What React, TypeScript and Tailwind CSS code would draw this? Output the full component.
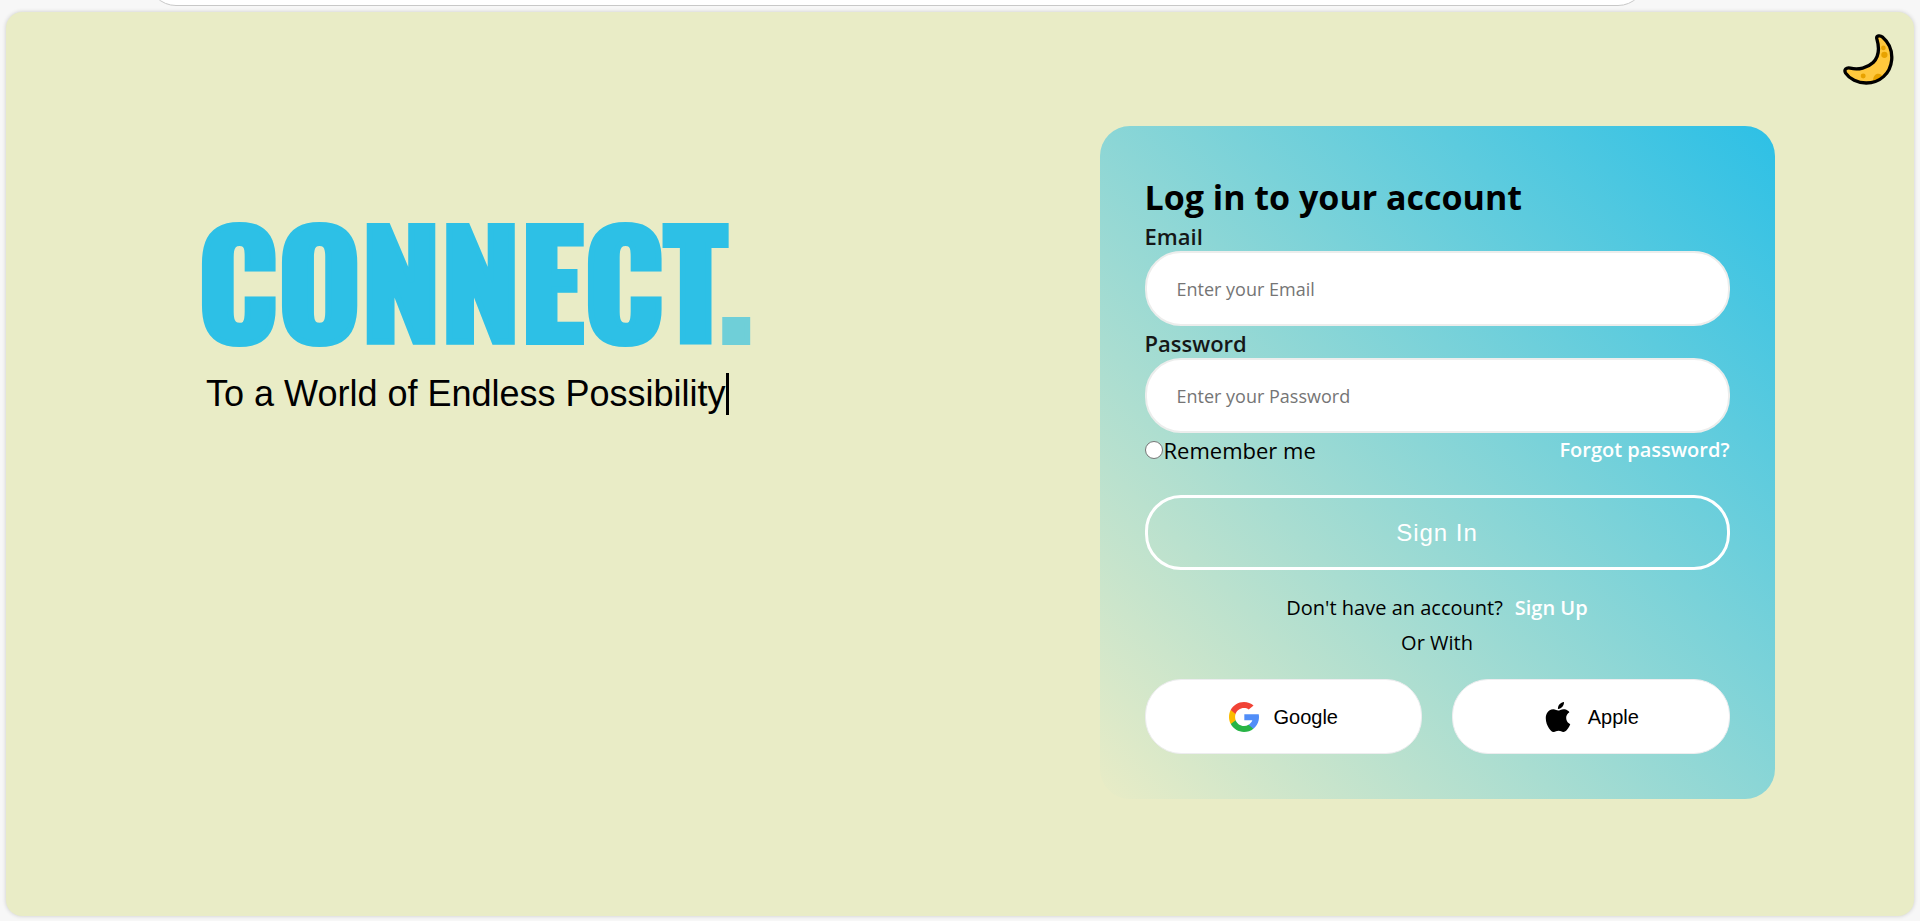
import React from "react";
import { SiApple } from "react-icons/si";

function MoonIcon() {
  return (
    <svg viewBox="-2 -2 154 154" className="size-[51px]" aria-hidden="true">
      <path
        d="M100 12C98 3 110 1 117 7C138 25 147 52 145 76C141 118 109 146 68 146C42 146 18 134 6 116C0 106 8 98 20 101C45 107 72 100 89 84C107 66 109 42 100 12Z"
        fill="#ffc83d"
      />
      <g fill="#e8a200">
        <circle cx="120" cy="40" r="7" />
        <circle cx="123" cy="61" r="9.5" />
        <circle cx="59" cy="125" r="7.5" />
        <path d="M89 142C88 124 97 117 106 118C111 119 114 121 116 123C109 131 100 139 89 142Z" />
      </g>
      <path
        d="M100 12C98 3 110 1 117 7C138 25 147 52 145 76C141 118 109 146 68 146C42 146 18 134 6 116C0 106 8 98 20 101C45 107 72 100 89 84C107 66 109 42 100 12Z"
        fill="none"
        stroke="#000"
        strokeWidth="10"
        strokeLinejoin="round"
      />
    </svg>
  );
}

function GoogleIcon() {
  return (
    <svg viewBox="0 0 512 512" className="size-[30px]" aria-hidden="true">
      <path fill="#FBBB00" d="M113.47,309.408L95.648,375.94l-65.139,1.378C11.042,341.211,0,299.9,0,256c0-42.451,10.324-82.483,28.624-117.732h0.014l57.992,10.632l25.404,57.644c-5.317,15.501-8.215,32.141-8.215,49.456C103.821,274.792,107.225,292.797,113.47,309.408z" />
      <path fill="#518EF8" d="M507.527,208.176C510.467,223.662,512,239.655,512,256c0,18.328-1.927,36.206-5.598,53.451c-12.462,58.683-45.025,109.925-90.134,146.187l-0.014-0.014l-73.044-3.727l-10.338-64.535c29.932-17.554,53.324-45.025,65.646-77.911h-136.89V208.176h138.887L507.527,208.176L507.527,208.176z" />
      <path fill="#28B446" d="M416.253,455.624l0.014,0.014C372.396,490.901,316.666,512,256,512c-97.491,0-182.252-54.491-225.491-134.681l82.961-67.91c21.619,57.698,77.278,98.771,142.53,98.771c28.047,0,54.323-7.582,76.87-20.818L416.253,455.624z" />
      <path fill="#F14336" d="M419.404,58.936l-82.933,67.896c-23.335-14.586-50.919-23.012-80.471-23.012c-66.729,0-123.429,42.957-143.965,102.724l-83.397-68.276h-0.014C71.23,56.123,157.06,0,256,0C318.115,0,375.068,22.126,419.404,58.936z" />
    </svg>
  );
}

function Field({ id, label, type }: { id: string; label: string; type: string }) {
  return (
    <div>
      <label htmlFor={id} className="block pt-0.5 text-[22px] leading-[30px] font-semibold text-[#151717]">
        {label}
      </label>
      <input
        id={id}
        type={type}
        placeholder={`Enter your ${label}`}
        className="block h-[75px] w-full rounded-[36px] border-2 border-[#ecedec] bg-white px-[30px] text-lg text-black outline-none placeholder:text-[#757575]"
      />
    </div>
  );
}

function SocialButton({ icon, name }: { icon: React.ReactNode; name: string }) {
  return (
    <button
      type="button"
      className="flex h-[75px] flex-1 items-center justify-center gap-[15px] rounded-[36px] border border-[#ededef] bg-white font-['Liberation_Sans',Arial,sans-serif] text-xl text-black"
    >
      {icon}
      {name}
    </button>
  );
}

export default function App() {
  return (
    <div className="flex min-h-screen flex-col bg-[#f7f7f7] px-1.5 pb-[5px] font-['Open_Sans','Noto_Sans',sans-serif] text-black">
      <div className="flex h-1.5 items-end overflow-hidden pr-[268px] pl-[142px]">
        <div className="h-14 flex-1 rounded-full border border-[#c8c8c8] bg-white" />
      </div>

      <main className="relative mt-1.5 grid flex-1 grid-cols-1 rounded-2xl bg-[#e9ecc6] shadow-[0_0_4px_rgba(0,0,0,0.18)] lg:grid-cols-2">
        <button type="button" aria-label="Toggle theme" className="absolute top-[22px] right-5">
          <MoonIcon />
        </button>

        <section className="px-6 pt-[171px] lg:pr-0 lg:pl-48">
          <h1 className="font-['Oswald','Roboto_Condensed',sans-serif] text-[142px] leading-[190px] font-bold text-[#2dc0e6] [-webkit-text-stroke:6px_#2dc0e6]">
            CONNECT
            <span className="text-[#6fcfd8] [-webkit-text-stroke:6px_#6fcfd8]">.</span>
          </h1>
          <p className="ml-2 w-fit border-r-[3px] border-black font-['Liberation_Sans',Arial,sans-serif] text-4xl leading-[42px]">
            To a World of Endless Possibility
          </p>
        </section>

        <section className="flex items-center justify-center pb-[3px]">
          <form className="w-full max-w-[675px] rounded-[30px] bg-[linear-gradient(45deg,#e9ecc6,#2dc0e6)] px-[45px] pt-[50px] pb-[45px]">
            <h2 className="text-[34px] leading-[43px] font-bold">Log in to your account</h2>
            <Field id="email" label="Email" type="email" />
            <Field id="password" label="Password" type="password" />

            <div className="flex items-center justify-between pt-0.5 leading-[30px]">
              <div className="flex items-center">
                <input
                  id="remember"
                  type="radio"
                  className="mr-px size-[18px] appearance-none rounded-full border border-[#767676] bg-white checked:bg-[#0075ff]"
                />
                <label htmlFor="remember" className="text-[22px]">
                  Remember me
                </label>
              </div>
              <a href="#forgot" className="text-xl leading-[30px] font-semibold text-white">
                Forgot password?
              </a>
            </div>

            <button
              type="submit"
              className="mt-[30px] h-[75px] w-full rounded-[36px] border-3 border-white font-['Liberation_Sans',Arial,sans-serif] text-2xl tracking-[1px] text-white"
            >
              Sign In
            </button>

            <p className="mt-5 text-center text-xl leading-[35px]">
              Don't have an account?
              <a href="#signup" className="ml-3 font-semibold text-white">
                Sign Up
              </a>
            </p>
            <p className="text-center text-xl leading-[35px]">Or With</p>

            <div className="mt-[19px] flex gap-[30px]">
              <SocialButton icon={<GoogleIcon />} name="Google" />
              <SocialButton icon={<SiApple className="size-[30px]" aria-hidden="true" />} name="Apple" />
            </div>
          </form>
        </section>
      </main>
    </div>
  );
}
